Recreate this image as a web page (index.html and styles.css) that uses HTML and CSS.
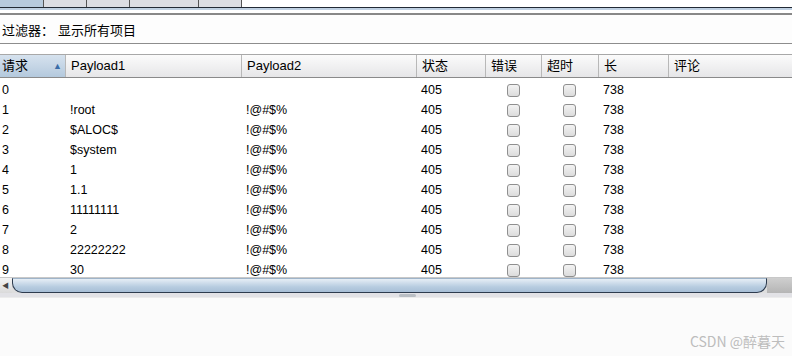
FILE: index.html
```html
<!DOCTYPE html>
<html lang="zh">
<head>
    <meta charset="UTF-8">
    <title>Intruder 结果</title>
    <link rel="stylesheet" href="styles.css">
</head>
<body>
    <div class="tabs">
        <div class="tab active" style="width:44px"></div>
        <div class="tab" style="width:43px"></div>
        <div class="tab" style="width:43px"></div>
        <div class="tab" style="width:69px"></div>
        <div class="tab" style="width:43px"></div>
    </div>
    <div class="tab-line"></div>

    <div class="filter">过滤器： 显示所有项目</div>

    <div class="table">
        <div class="row head">
            <div class="cell sorted">请求<span class="arrow">▲</span></div>
            <div class="cell">Payload1</div>
            <div class="cell">Payload2</div>
            <div class="cell">状态</div>
            <div class="cell">错误</div>
            <div class="cell">超时</div>
            <div class="cell">长</div>
            <div class="cell">评论</div>
        </div>
        <div class="body" id="rows"></div>
        <div class="hscroll">
            <div class="arrow-left">◀</div>
            <div class="thumb"></div>
            <div class="track"></div>
        </div>
    </div>

    <div class="splitter"><span class="grip"></span></div>
    <div class="lower">
        <span class="mark">CSDN @醉暮天</span>
    </div>

    <script>
        var data = [
            ["0", "", ""],
            ["1", "!root", "!@#$%"],
            ["2", "$ALOC$", "!@#$%"],
            ["3", "$system", "!@#$%"],
            ["4", "1", "!@#$%"],
            ["5", "1.1", "!@#$%"],
            ["6", "11111111", "!@#$%"],
            ["7", "2", "!@#$%"],
            ["8", "22222222", "!@#$%"],
            ["9", "30", "!@#$%"]
        ];
        var html = "";
        data.forEach(function (d) {
            html += '<div class="row">' +
                '<div class="cell">' + d[0] + '</div>' +
                '<div class="cell">' + d[1] + '</div>' +
                '<div class="cell">' + d[2] + '</div>' +
                '<div class="cell">405</div>' +
                '<div class="cell mid"><span class="check"></span></div>' +
                '<div class="cell mid"><span class="check"></span></div>' +
                '<div class="cell">738</div>' +
                '<div class="cell"></div>' +
                '</div>';
        });
        document.getElementById("rows").innerHTML = html;
    </script>
</body>
</html>
```

FILE: styles.css
```css
* {
    box-sizing: border-box;
}

body {
    margin: 0;
    width: 792px;
    height: 356px;
    overflow: hidden;
    background-color: #fff;
    font-family: "Liberation Sans", Arial, "Noto Sans CJK SC", sans-serif;
    font-size: 12.5px;
    color: #000;
}

/* 상단 탭 */
.tabs {
    display: flex;
    height: 7px;
    background-color: #fff;
}

.tab {
    height: 7px;
    background-color: #dcdde3;
    border-right: 1px solid #555;
}

.tab.active {
    background-color: #b7cadd;
}

.tab-line {
    height: 8px;
    border-top: 1px solid #222a35;
    border-bottom: 2px solid #888;
    background: linear-gradient(#bfd0e2 0, #bfd0e2 2px, #fff 2px);
}

.filter {
    height: 29px;
    padding: 7px 0 0 2px;
    font-family: "Noto Sans CJK SC", sans-serif;
    font-size: 13px;
    line-height: 15px;
    word-spacing: 1px;
    border-bottom: 1px solid #8d8d8d;
    background-color: #fdfdfd;
}

.table {
    margin-top: 10px;
}

.row {
    display: grid;
    grid-template-columns: 65px 176px 175px 69px 56px 57px 70px 1fr;
    height: 20px;
    align-items: center;
}

.head {
    height: 24px;
    border-top: 1px solid #a8a8a8;
    border-bottom: 1px solid #8a8a8a;
    background: linear-gradient(#fbfbfb, #e6e6e8);
    font-family: "Liberation Sans", "Noto Sans CJK SC", sans-serif;
    font-size: 13px;
}

.head .cell {
    height: 22px;
    line-height: 22px;
    padding-left: 5px;
    border-left: 1px solid #b8b8b8;
}

.head .cell:first-child {
    border-left: none;
    padding-left: 2px;
}

.head .sorted {
    position: relative;
    background: linear-gradient(#d6e2ee, #b4c9dd);
}

.arrow {
    position: absolute;
    right: 3px;
    top: 0;
    font-size: 9px;
    color: #3b6da8;
}

.body {
    height: 201px;
    padding-top: 2px;
}

.body .cell {
    padding-left: 5px;
    line-height: 20px;
    white-space: nowrap;
}

.body .cell:first-child {
    padding-left: 2px;
}

.cell.mid {
    display: flex;
    justify-content: center;
    align-items: center;
    padding-left: 0;
}

.check {
    width: 13px;
    height: 13px;
    border: 1px solid #8f8f8f;
    border-radius: 3px;
    background: linear-gradient(#f3f3f3, #dcdcdc);
}

.hscroll {
    display: flex;
    height: 16px;
    margin-top: -2px;
    border-top: 1px solid #c8c8c8;
    background-color: #dedede;
}

.arrow-left {
    width: 12px;
    font-size: 7px;
    line-height: 15px;
    color: #444;
    padding-left: 2px;
    background: linear-gradient(#f4f4f4, #dadada);
}

.thumb {
    width: 755px;
    height: 15px;
    border: 1px solid #2d3b4e;
    border-top-color: #9fb4c9;
    border-radius: 0 0 10px 10px;
    background: linear-gradient(#e6eef6, #b7cce0 60%, #a7bed6);
}

.track {
    flex: 1;
    background: linear-gradient(#cfcfcf, #b5b5b5);
}

.splitter {
    height: 5px;
    background-color: #e2e2e6;
    border-bottom: 1px solid #ececec;
    display: flex;
    justify-content: center;
}

.grip {
    width: 17px;
    height: 3px;
    margin-left: 22px;
    margin-top: 1px;
    border-radius: 2px;
    background-color: #b9bec4;
}

.lower {
    height: 60px;
    background-color: #fbfbfb;
    position: relative;
}

.mark {
    position: absolute;
    right: 7px;
    top: 33px;
    font-family: "Noto Sans CJK SC", sans-serif;
    font-size: 14px;
    color: #bdbdbd;
}
```
